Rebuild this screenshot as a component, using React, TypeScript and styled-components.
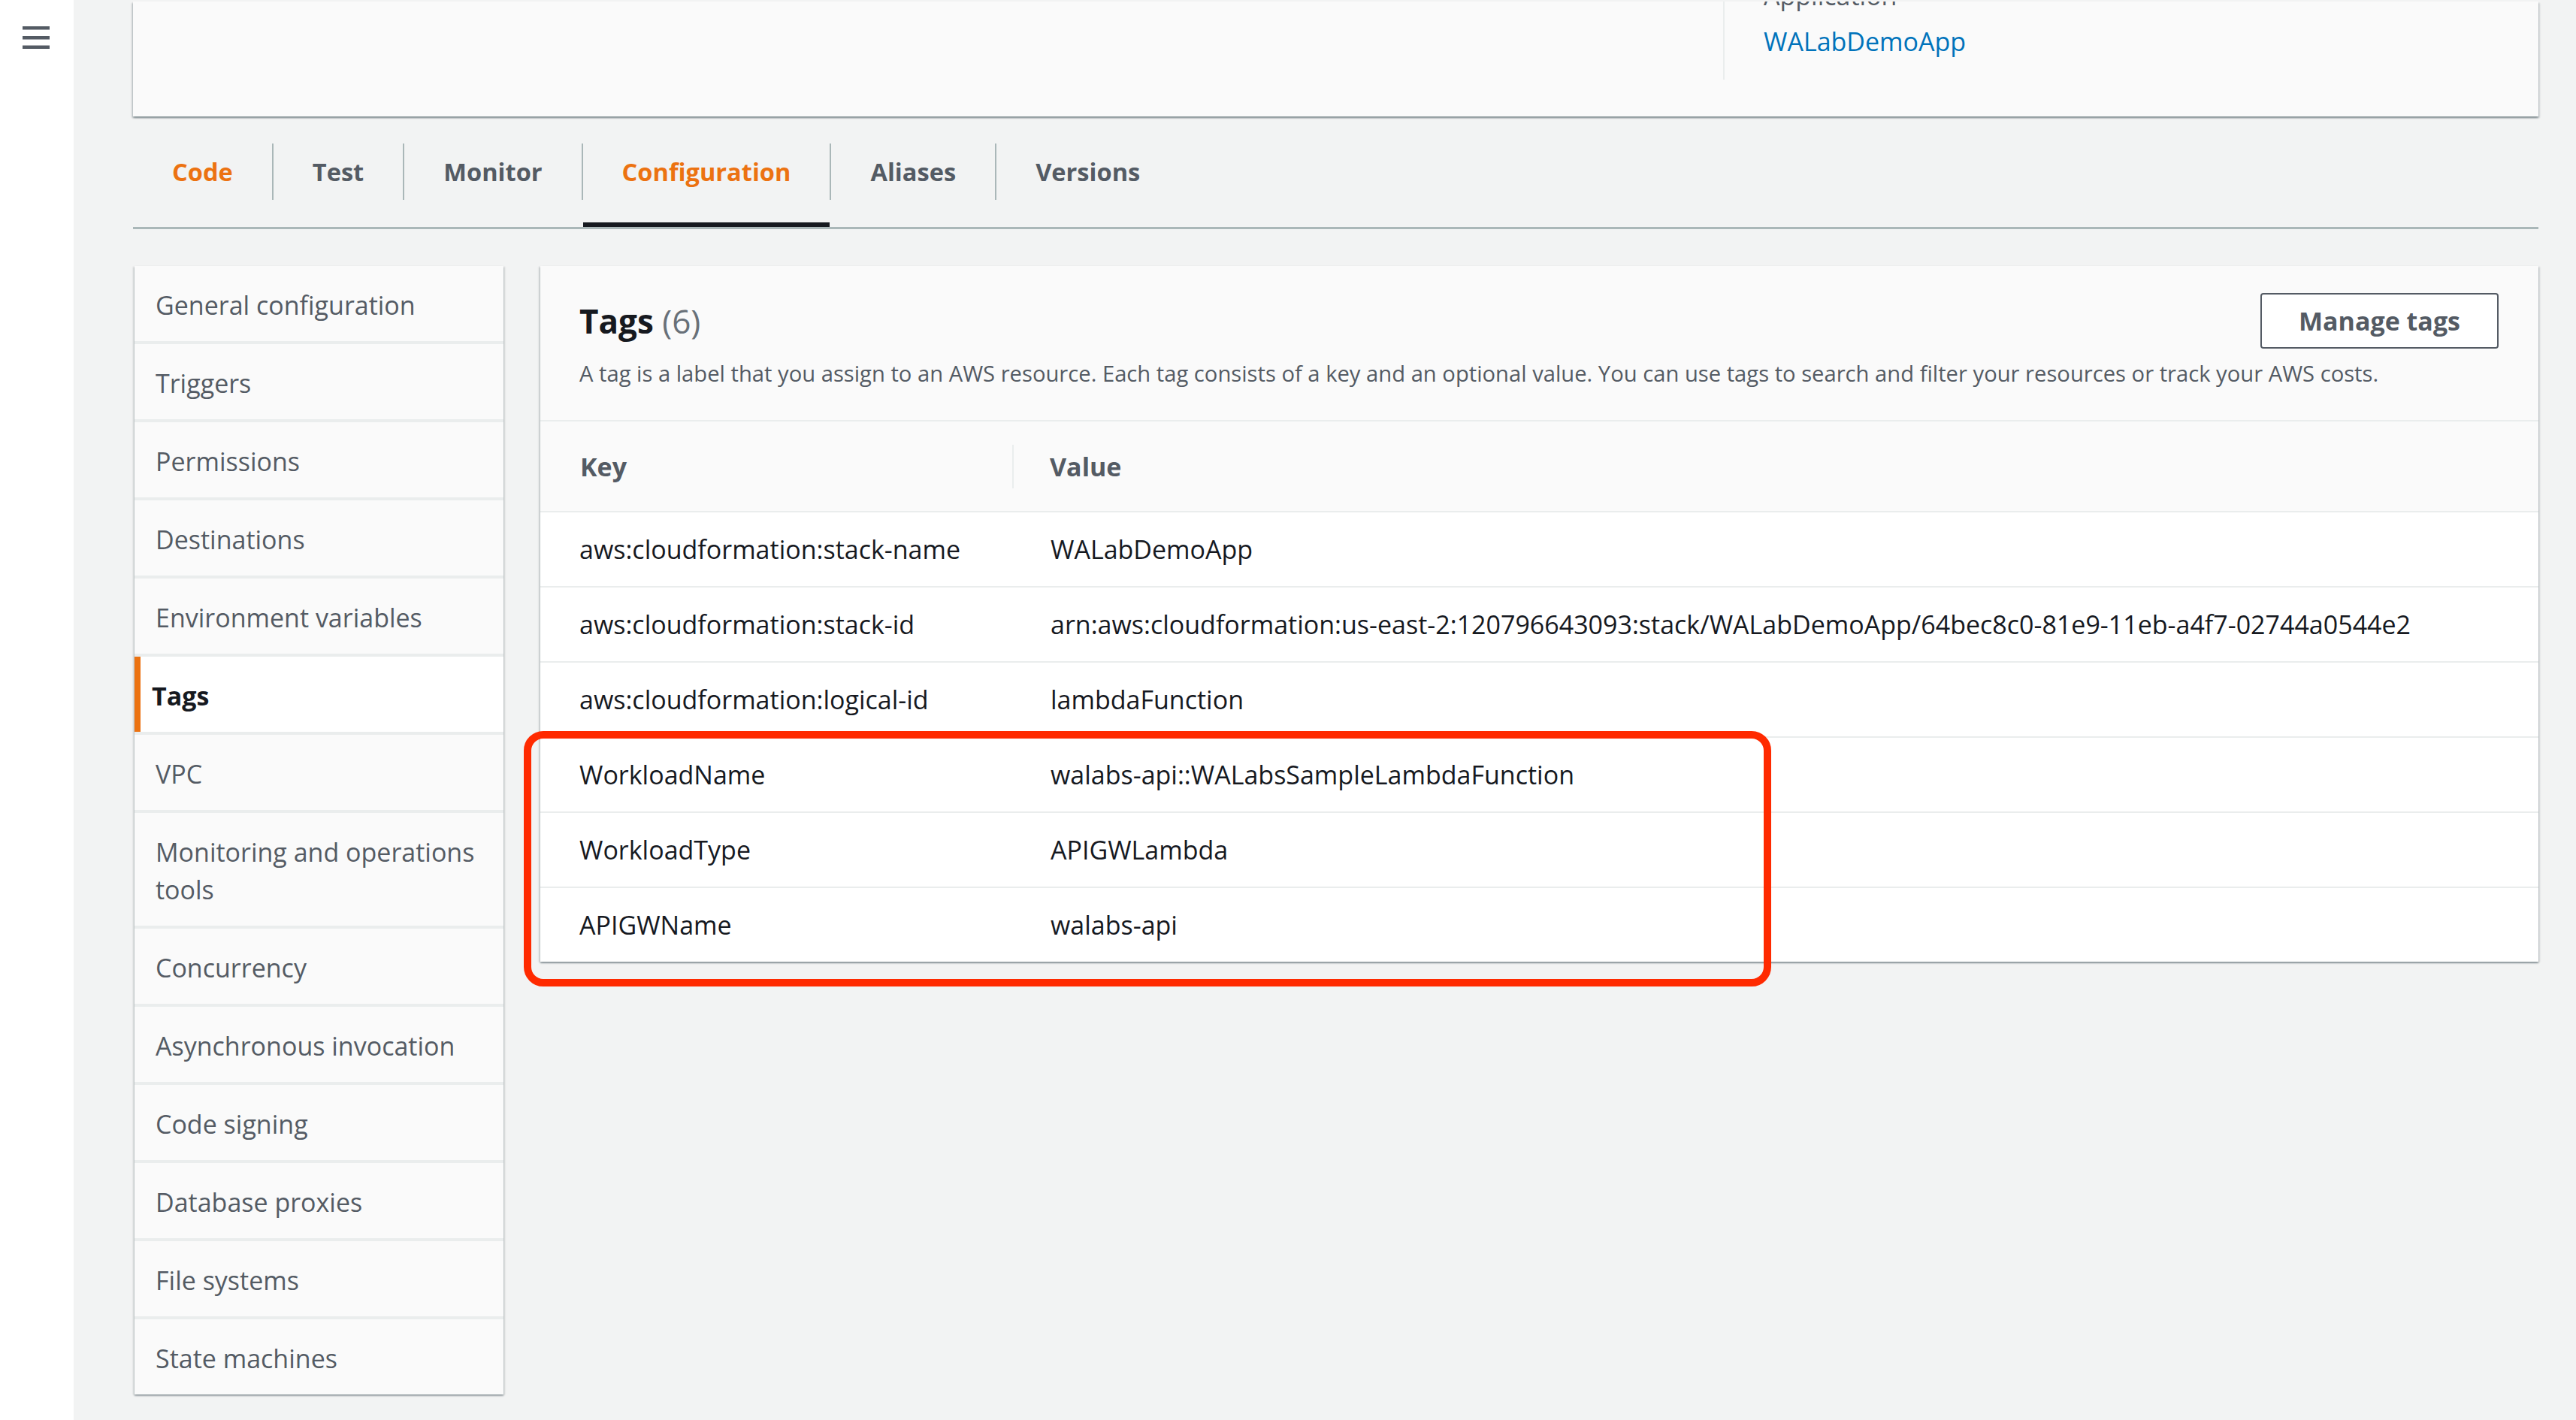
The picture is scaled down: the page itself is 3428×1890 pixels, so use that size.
import styled, { createGlobalStyle } from "styled-components"

const GlobalStyle = createGlobalStyle`
    html, body {
        margin: 0;
        padding: 0;
        background: #f2f3f3;
        font-family: "Open Sans", "Noto Sans", "Liberation Sans", sans-serif;
    }
    * {
        box-sizing: border-box;
    }
`

const tabs = ["Code", "Test", "Monitor", "Configuration", "Aliases", "Versions"]
const orangeTabs = ["Code", "Configuration"]

const navItems = [
    "General configuration",
    "Triggers",
    "Permissions",
    "Destinations",
    "Environment variables",
    "Tags",
    "VPC",
    "Monitoring and operations|tools",
    "Concurrency",
    "Asynchronous invocation",
    "Code signing",
    "Database proxies",
    "File systems",
    "State machines",
]

const tags = [
    ["aws:cloudformation:stack-name", "WALabDemoApp"],
    [
        "aws:cloudformation:stack-id",
        "arn:aws:cloudformation:us-east-2:120796643093:stack/WALabDemoApp/64bec8c0-81e9-11eb-a4f7-02744a0544e2",
    ],
    ["aws:cloudformation:logical-id", "lambdaFunction"],
    ["WorkloadName", "walabs-api::WALabsSampleLambdaFunction"],
    ["WorkloadType", "APIGWLambda"],
    ["APIGWName", "walabs-api"],
]

function Hamburger() {
    return (
        <svg width="36" height="31" viewBox="0 0 36 31">
            <rect x="0" y="0" width="36" height="4.5" fill="#545b64" />
            <rect x="0" y="13" width="36" height="4.5" fill="#545b64" />
            <rect x="0" y="25.5" width="36" height="4.5" fill="#545b64" />
        </svg>
    )
}

function App() {
    return (
        <>
            <GlobalStyle />
            <Page>
                <Rail>
                    <Hamburger />
                </Rail>

                <Main>
                    <TopCard>
                        <Spacer />
                        <AppColumn>
                            <AppLabel>Application</AppLabel>
                            <AppLink>WALabDemoApp</AppLink>
                        </AppColumn>
                    </TopCard>

                    <TabBar>
                        {tabs.map((t, i) => (
                            <TabGroup key={t}>
                                {i > 0 && <TabSep />}
                                <Tab $orange={orangeTabs.includes(t)} $active={t === "Configuration"}>
                                    {t}
                                </Tab>
                            </TabGroup>
                        ))}
                    </TabBar>

                    <Content>
                        <SideNav>
                            {navItems.map((n) => (
                                <NavItem key={n} $active={n === "Tags"}>
                                    {n.split("|").map((part, i) => (
                                        <span key={part}>
                                            {i > 0 && <br />}
                                            {part}
                                        </span>
                                    ))}
                                </NavItem>
                            ))}
                        </SideNav>

                        <TagsCard>
                            <CardHeader>
                                <TitleRow>
                                    <Title>
                                        Tags <Count>(6)</Count>
                                    </Title>
                                    <ManageButton>Manage tags</ManageButton>
                                </TitleRow>
                                <Description>
                                    A tag is a label that you assign to an AWS resource. Each tag consists of a key
                                    and an optional value. You can use tags to search and filter your resources or
                                    track your AWS costs.
                                </Description>
                            </CardHeader>

                            <TableHead>
                                <HeadCell>Key</HeadCell>
                                <HeadValue>
                                    <HeadDivider />
                                    Value
                                </HeadValue>
                            </TableHead>

                            {tags.map(([k, v]) => (
                                <Row key={k}>
                                    <KeyCell>{k}</KeyCell>
                                    <ValueCell>{v}</ValueCell>
                                </Row>
                            ))}

                            <Highlight />
                        </TagsCard>
                    </Content>
                </Main>
            </Page>
        </>
    )
}

export default App

const Page = styled.div`
    display: flex;
    min-height: 100vh;
`

const Rail = styled.nav`
    width: 98px;
    flex: none;
    background: #ffffff;
    padding: 35px 0 0 30px;
`

const Main = styled.main`
    flex: 1;
    min-width: 0;
    padding: 2px 50px 0 79px;
`

const TopCard = styled.div`
    height: 153px;
    display: flex;
    align-items: flex-start;
    background: #fafafa;
    overflow: hidden;
    box-shadow: 0 2px 2px 0 rgba(0, 28, 36, 0.35), 2px 2px 2px 0 rgba(0, 28, 36, 0.12),
        -2px 2px 2px 0 rgba(0, 28, 36, 0.12);
`

const Spacer = styled.div`
    width: 2116px;
    flex: none;
`

const AppColumn = styled.div`
    height: 104px;
    display: flex;
    flex-direction: column;
    border-left: 2px solid #eaeded;
    padding-left: 52px;
`

const AppLabel = styled.div`
    margin-top: -32px;
    font-size: 34px;
    line-height: 48px;
    color: #545b64;
`

const AppLink = styled.a`
    margin-top: 13px;
    font-size: 34px;
    line-height: 48px;
    color: #0073bb;
    text-decoration: none;
    cursor: pointer;
`

const TabBar = styled.div`
    height: 150px;
    display: flex;
    border-bottom: 3px solid #aab7b8;
`

const TabGroup = styled.div`
    display: flex;
`

const TabSep = styled.div`
    width: 2px;
    height: 75px;
    align-self: center;
    background: #aab7b8;
`

const Tab = styled.div<{ $orange?: boolean; $active?: boolean }>`
    display: flex;
    align-items: center;
    padding: 0 52px;
    font-size: 32.6px;
    font-weight: 700;
    color: ${(p) => (p.$orange ? "#ec7211" : "#545b64")};
    box-shadow: ${(p) => (p.$active ? "inset 0 -6px 0 0 #16191f" : "none")};
    cursor: pointer;
`

const Content = styled.div`
    display: flex;
    align-items: flex-start;
    gap: 49px;
    margin-top: 49px;
    padding-left: 2px;
`

const SideNav = styled.div`
    width: 491px;
    flex: none;
    display: flex;
    flex-direction: column;
    gap: 4px;
    background: #eaeded;
    box-shadow: 0 2px 2px 0 rgba(0, 28, 36, 0.3), 2px 1px 2px 0 rgba(0, 28, 36, 0.12),
        -2px 1px 2px 0 rgba(0, 28, 36, 0.12);
`

const NavItem = styled.div<{ $active?: boolean }>`
    padding: 27px 28px 23px ${(p) => (p.$active ? "15px" : "28px")};
    font-size: 34px;
    line-height: 50px;
    white-space: nowrap;
    background: ${(p) => (p.$active ? "#ffffff" : "#fafafa")};
    border-left: ${(p) => (p.$active ? "8px solid #ec7211" : "none")};
    font-weight: ${(p) => (p.$active ? 700 : 400)};
    color: ${(p) => (p.$active ? "#16191f" : "#545b64")};
    cursor: pointer;
`

const TagsCard = styled.div`
    flex: 1;
    min-width: 0;
    position: relative;
    background: #ffffff;
    box-shadow: 0 2px 2px 0 rgba(0, 28, 36, 0.35), 2px 1px 2px 0 rgba(0, 28, 36, 0.12),
        -2px 1px 2px 0 rgba(0, 28, 36, 0.12);
`

const CardHeader = styled.div`
    background: #fafafa;
    padding: 36px 53px 42px 52px;
    border-bottom: 2px solid #eaeded;
`

const TitleRow = styled.div`
    height: 74px;
    display: flex;
    align-items: center;
    justify-content: space-between;
`

const Title = styled.h2`
    margin: 0;
    font-size: 44px;
    line-height: 1.2;
    font-weight: 700;
    color: #16191f;
`

const Count = styled.span`
    font-weight: 400;
    color: #687078;
`

const ManageButton = styled.button`
    width: 317px;
    height: 74px;
    border: 2px solid #545b64;
    border-radius: 4px;
    background: #ffffff;
    font-family: inherit;
    font-size: 34px;
    font-weight: 700;
    color: #545b64;
    cursor: pointer;
`

const Description = styled.p`
    margin: 13px 0 0;
    font-size: 29.2px;
    line-height: 40px;
    color: #545b64;
    white-space: nowrap;
`

const TableHead = styled.div`
    height: 119px;
    display: grid;
    grid-template-columns: 628px 1fr;
    align-items: center;
    background: #fafafa;
    font-size: 34px;
    font-weight: 700;
    color: #545b64;
`

const HeadCell = styled.div`
    padding-left: 53px;
`

const HeadValue = styled.div`
    display: flex;
    align-items: center;
    gap: 48px;
`

const HeadDivider = styled.div`
    width: 2px;
    height: 58px;
    background: #eaeded;
`

const Row = styled.div`
    height: 100px;
    display: grid;
    grid-template-columns: 628px 1fr;
    align-items: center;
    border-top: 2px solid #eaeded;
    font-size: 34px;
    color: #16191f;
    white-space: nowrap;
`

const KeyCell = styled.div`
    padding-left: 52px;
`

const ValueCell = styled.div`
    padding-left: 51px;
`

const Highlight = styled.div`
    position: absolute;
    left: -22px;
    top: 619px;
    width: 1660px;
    height: 340px;
    border: 10px solid #ff2a00;
    border-radius: 26px;
    pointer-events: none;
`
